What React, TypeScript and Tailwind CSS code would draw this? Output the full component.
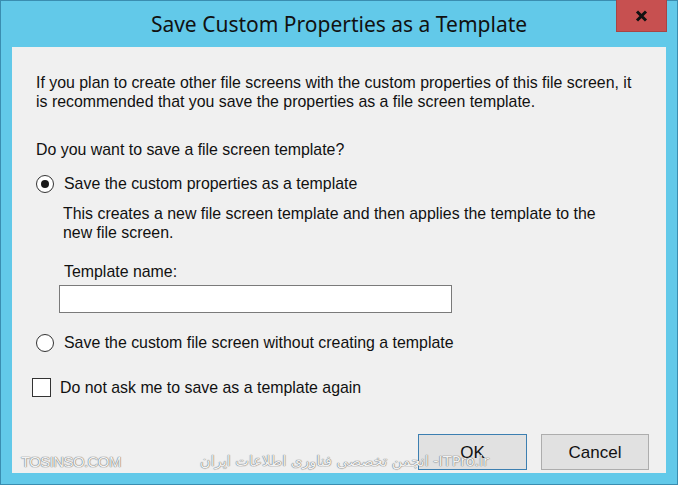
import * as React from 'react';

const body = "font-['Liberation_Sans',Arial,sans-serif]";

function Radio({ checked }: { checked?: boolean }) {
  return (
    <span className="flex h-[18px] w-[18px] shrink-0 items-center justify-center rounded-full border border-[#333333] bg-white">
      {checked && <span className="h-[8px] w-[8px] rounded-full bg-[#1a1a1a]"></span>}
    </span>
  );
}

export default function App() {
  return (
    <div className="flex h-[485px] w-[678px] flex-col border border-[#3a8db0] bg-[#62c9e9]">
      {/* title bar */}
      <div className="relative flex h-[46px] shrink-0 items-center justify-center">
        <span className="pt-[1px] font-['Noto_Sans',sans-serif] text-[21px] text-[#111111]">
          Save Custom Properties as a Template
        </span>
        <button className="absolute top-[-1px] right-[10px] flex h-[32px] w-[51px] items-center justify-center border border-t-0 border-[#a84444] bg-[#c75050]">
          <svg width="13" height="12" viewBox="0 0 13 12">
            <path d="M2 1.5 L11 10.5 M11 1.5 L2 10.5" stroke="#111" strokeWidth="3" />
          </svg>
        </button>
      </div>

      {/* client area */}
      <div
        className={`relative mx-[11px] mb-[11px] flex flex-1 flex-col bg-[#f0f0f0] pl-[24px] pr-[12px] pt-[26px] pb-[3px] text-[15.9px] leading-[19px] text-[#111111] ${body}`}
      >
        <p className="whitespace-nowrap">
          If you plan to create other file screens with the custom properties of this file screen, it
          <br />
          is recommended that you save the properties as a file screen template.
        </p>

        <p className="mt-[29px]">Do you want to save a file screen template?</p>

        <label className="mt-[15px] flex items-center gap-[10px]">
          <Radio checked />
          <span>Save the custom properties as a template</span>
        </label>

        <div className="ml-[27px] mt-[11px]">
          <p className="whitespace-nowrap">
            This creates a new file screen template and then applies the template to the
            <br />
            new file screen.
          </p>
          <p className="ml-[1px] mt-[20px]">Template name:</p>
          <div className="-ml-[4px] mt-[4px] h-[28px] w-[393px] border border-[#7a7a7a] bg-white"></div>
        </div>

        <label className="mt-[20px] flex items-center gap-[10px]">
          <Radio />
          <span>Save the custom file screen without creating a template</span>
        </label>

        <label className="-ml-[4px] mt-[26px] flex items-center gap-[9px]">
          <span className="h-[19px] w-[19px] shrink-0 border border-[#333333] bg-white"></span>
          <span>Do not ask me to save as a template again</span>
        </label>

        <div className="mt-auto mr-[5px] flex justify-end gap-[14px]">
          <button className="flex h-[36px] w-[109px] items-center justify-center border border-[#3c7fb1] bg-[#e1e1e1] text-[17px] text-[#111111]">
            OK
          </button>
          <button className="flex h-[36px] w-[108px] items-center justify-center border border-[#adadad] bg-[#e1e1e1] text-[17px] text-[#111111]">
            Cancel
          </button>
        </div>

        {/* watermark */}
        <div className="pointer-events-none absolute bottom-[2px] left-[9px] text-[15px] tracking-[-0.6px] text-[#f2f2f2] [text-shadow:0_0_1px_#666,0_0_1px_#666]">
          TOSINSO.COM
        </div>
        <div
          dir="rtl"
          className="pointer-events-none absolute bottom-[2px] left-[188px] font-['DejaVu_Sans',sans-serif] text-[14.5px] text-[#f2f2f2] [text-shadow:0_0_1px_#666,0_0_1px_#666]"
        >
          ITPro.ir- انجمن تخصصی فناوری اطلاعات ایران
        </div>
      </div>
    </div>
  );
}
